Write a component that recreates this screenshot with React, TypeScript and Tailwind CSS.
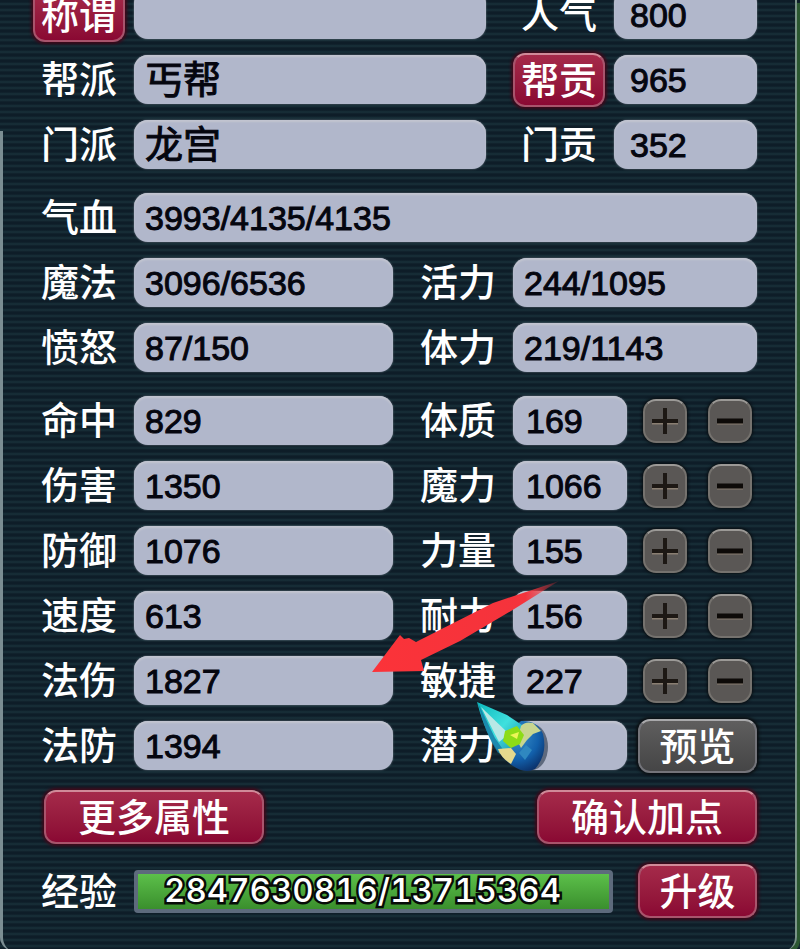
import { clsx } from 'clsx'

type FieldProps = {
  id: string
  value: string
  className?: string
}

function Field({ id, value, className }: FieldProps) {
  return (
    <input
      id={id}
      type="text"
      readOnly
      defaultValue={value}
      className={clsx(
        "h-[49px] min-w-0 rounded-[14px] bg-[#b1b7cb] pt-0.5 font-['Liberation_Sans','Noto_Sans_CJK_SC',sans-serif] text-[#05060f] shadow-[inset_0_2px_2px_#c2c5d0,0_0_2px_#76808f] outline-none [-webkit-text-stroke:1px_#05060f]",
        className,
      )}
    />
  )
}

function Label({ id, text }: { id: string; text: string }) {
  return (
    <label htmlFor={id} className="w-[93px] shrink-0 pb-1.5 whitespace-nowrap text-[38px] leading-[43px] font-medium text-white">
      {text}
    </label>
  )
}

const buttonBase = 'flex h-[54px] shrink-0 items-center justify-center rounded-[12px] border-2 pb-1 text-[38px] leading-[46px] font-medium whitespace-nowrap text-white'
const redButton = 'border-[#a8546c] border-t-[#d08a98] bg-linear-to-b from-[#a52a4a] to-[#8a0833] shadow-[0_0_3px_2px_#3f0719]'
const grayButton = 'border-[#74747a] border-t-[#a9a9ab] bg-linear-to-b from-[#5f5e5e] to-[#454546] shadow-[0_0_3px_2px_#0b0f12]'

function StepButton({ kind, name }: { kind: 'plus' | 'minus'; name: string }) {
  return (
    <button
      type="button"
      aria-label={`${name} ${kind === 'plus' ? '+' : '-'}`}
      className="flex size-11 items-center justify-center rounded-[13px] border-2 border-[#75726e] border-t-[#9b9996] bg-[#5a5755] shadow-[0_0_3px_1px_#080d10]"
    >
      <svg viewBox="0 0 26 26" className="size-[26px]" fill="none">
        <path d="M0 15.5H26" stroke="#8a7f72" strokeWidth="2" />
        {kind === 'plus' ? (
          <path d="M0 13H26M13 0V26" stroke="#1d1814" strokeWidth="4" />
        ) : (
          <path d="M0 13H26" stroke="#0d0a08" strokeWidth="5" />
        )}
      </svg>
    </button>
  )
}

const points = [
  { left: '命中', leftValue: '829', right: '体质', rightValue: '169' },
  { left: '伤害', leftValue: '1350', right: '魔力', rightValue: '1066' },
  { left: '防御', leftValue: '1076', right: '力量', rightValue: '155' },
  { left: '速度', leftValue: '613', right: '耐力', rightValue: '156' },
  { left: '法伤', leftValue: '1827', right: '敏捷', rightValue: '227' },
  { left: '法防', leftValue: '1394', right: '潜力', rightValue: '' },
]

// 指向法伤的红色箭头
function Arrow() {
  return (
    <svg viewBox="0 0 190 96" className="pointer-events-none absolute top-[184px] right-[196px] w-[190px]">
      <defs>
        <linearGradient id="arrow-fade" x1="0" y1="0" x2="1" y2="0">
          <stop offset="0" stopColor="#fb3339" />
          <stop offset="0.82" stopColor="#f4333c" />
          <stop offset="1" stopColor="#f4333c" stopOpacity="0.15" />
        </linearGradient>
      </defs>
      <path d="M1 92L29 55L33 59L38 58L45 62L122 23L188 1L140 31L89 61L50 80L53 91Z" fill="url(#arrow-fade)" />
    </svg>
  )
}

// 游戏鼠标指针
function Cursor() {
  return (
    <svg viewBox="0 0 76 76" className="pointer-events-none absolute top-[304px] right-[206px] w-[76px]">
      <defs>
        <linearGradient id="cursor-cone" x1="0" y1="0" x2="1" y2="1">
          <stop offset="0" stopColor="#0bb9bd" />
          <stop offset="0.5" stopColor="#3fe0de" />
          <stop offset="1" stopColor="#1681a8" />
        </linearGradient>
        <radialGradient id="cursor-globe" cx="0.4" cy="0.3" r="0.8">
          <stop offset="0" stopColor="#3d94cc" />
          <stop offset="0.6" stopColor="#1260ab" />
          <stop offset="1" stopColor="#0a2b62" />
        </radialGradient>
      </defs>
      <ellipse cx="57" cy="47" rx="16" ry="23" fill="#26354a" opacity="0.6" />
      <path d="M22 46L46 21Q62 20 68 34Q73 54 60 69Q50 74 38 66Q25 57 22 46Z" fill="url(#cursor-globe)" />
      <path d="M2 2L32 15L50 27L42 44L25 54Q11 36 2 2Z" fill="url(#cursor-cone)" />
      <path d="M6 7L34 34L24 42Z" fill="#b8e8e6" />
      <path d="M3 3L20 38L29 51L23 53Q10 34 3 3Z" fill="#1778a5" opacity="0.8" />
      <path d="M46 26Q50 21 58 23L66 31L58 34L52 40L46 48L42 40Z" fill="#c8d690" />
      <path d="M30 31L42 26L49 35L45 44L36 48L28 41Z" fill="#8ddc17" />
      <path d="M35 35L44 32L42 39Z" fill="#eef557" />
      <path d="M23 49L36 48L41 54L36 64Q26 58 23 49Z" fill="#e5d98d" />
      <path d="M44 53L51 45L57 50L50 60Z" fill="#2f88c0" />
    </svg>
  )
}

export default function App() {
  return (
    <main className="relative min-h-screen overflow-hidden bg-[#10212a] bg-[repeating-linear-gradient(to_bottom,#0e1d28_0px,#0e1d28_2px,#19313a_4px,#0e1d28_6px)] pr-[43px] pb-8 pl-[41px] font-['Noto_Sans_CJK_SC',sans-serif]">
      {/* 面板边框 */}
      <div className="pointer-events-none absolute top-[131px] -bottom-px left-0 w-6 rounded-bl-[14px] border-l-[3px] border-[#7b8d92]" />
      <div className="pointer-events-none absolute top-0 right-[3px] -bottom-px w-6 rounded-br-[14px] border-r-2 border-[#7b9489] shadow-[3px_3px_0_0_#2c5831]" />

      <form className="-mt-[10px] flex flex-col gap-6">
        <section className="flex flex-col gap-4">
          <div className="flex items-center">
            <div className="w-[93px] shrink-0">
              <button type="button" className={clsx(buttonBase, redButton, '-mx-2 -my-1 w-[92px]')}>称谓</button>
            </div>
            <Field id="title" value="" className="flex-1" />
            <div className="ml-[27px] flex w-[101px] pl-2">
              <Label id="fame" text="人气" />
            </div>
            <Field id="fame" value="800" className="w-[143px] pl-4 text-[34px]" />
          </div>
          <div className="flex items-center">
            <Label id="gang" text="帮派" />
            <Field id="gang" value="丐帮" className="flex-1 pl-[11px] text-[38px]" />
            <div className="ml-[27px] w-[101px]">
              <button type="button" className={clsx(buttonBase, redButton, '-my-1 w-[92px]')}>帮贡</button>
            </div>
            <Field id="gang-points" value="965" className="w-[143px] pl-4 text-[34px]" />
          </div>
          <div className="flex items-center">
            <Label id="school" text="门派" />
            <Field id="school" value="龙宫" className="flex-1 pl-[11px] text-[38px]" />
            <div className="ml-[27px] flex w-[101px] pl-2">
              <Label id="school-points" text="门贡" />
            </div>
            <Field id="school-points" value="352" className="w-[143px] pl-4 text-[34px]" />
          </div>
        </section>

        <section className="flex flex-col gap-4">
          <div className="flex items-center">
            <Label id="hp" text="气血" />
            <Field id="hp" value="3993/4135/4135" className="flex-1 pl-[11px] text-[34px]" />
          </div>
          <div className="flex items-center">
            <Label id="mp" text="魔法" />
            <Field id="mp" value="3096/6536" className="mr-[27px] flex-1 pl-[11px] text-[34px]" />
            <Label id="energy" text="活力" />
            <Field id="energy" value="244/1095" className="w-[244px] pl-[11px] text-[34px]" />
          </div>
          <div className="flex items-center">
            <Label id="anger" text="愤怒" />
            <Field id="anger" value="87/150" className="mr-[27px] flex-1 pl-[11px] text-[34px]" />
            <Label id="stamina" text="体力" />
            <Field id="stamina" value="219/1143" className="w-[244px] pl-[11px] text-[34px]" />
          </div>
        </section>

        <section className="relative flex flex-col gap-4">
          {points.map(point => (
            <div key={point.left} className="flex items-center">
              <Label id={point.left} text={point.left} />
              <Field id={point.left} value={point.leftValue} className="mr-[27px] flex-1 pl-[11px] text-[34px]" />
              <Label id={point.right} text={point.right} />
              <Field id={point.right} value={point.rightValue} className="w-[114px] pl-[13px] text-[34px]" />
              {point.rightValue ? (
                <div className="flex w-[130px] items-center gap-[21px] pl-4">
                  <StepButton kind="plus" name={point.right} />
                  <StepButton kind="minus" name={point.right} />
                </div>
              ) : (
                <div className="w-[130px] pl-[11px]">
                  <button type="button" className={clsx(buttonBase, grayButton, '-my-1 w-full')}>预览</button>
                </div>
              )}
            </div>
          ))}
          <Arrow />
          <Cursor />
        </section>

        <section className="-mt-1 flex flex-col gap-5">
          <div className="flex justify-between pl-[3px]">
            <button type="button" className={clsx(buttonBase, redButton, 'w-[220px]')}>更多属性</button>
            <button type="button" className={clsx(buttonBase, redButton, 'w-[220px]')}>确认加点</button>
          </div>
          <div className="flex items-center">
            <Label id="exp" text="经验" />
            <input
              id="exp"
              type="text"
              readOnly
              defaultValue="2847630816/13715364"
              className="mr-[25px] h-[43px] min-w-0 flex-1 rounded-[4px] border-4 border-[#5d6a7c] bg-linear-to-b from-[#5cc04a] to-[#3a8f2d] pl-[26px] font-['Inter',sans-serif] text-[33px] font-medium text-white tabular-nums outline-none [paint-order:stroke_fill] [-webkit-text-stroke:5px_#070b08]"
            />
            <button type="button" className={clsx(buttonBase, redButton, 'w-[119px]')}>升级</button>
          </div>
        </section>
      </form>
    </main>
  )
}
